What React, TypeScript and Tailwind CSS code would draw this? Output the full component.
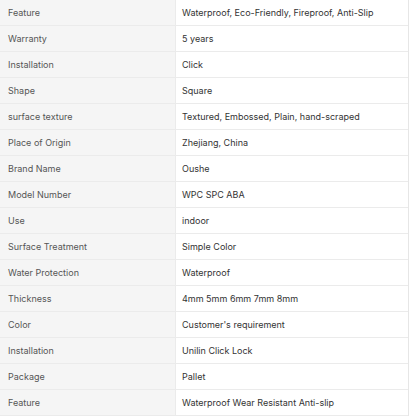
import React from 'react';

const rows = [
  ['Feature', 'Waterproof, Eco-Friendly, Fireproof, Anti-Slip'],
  ['Warranty', '5 years'],
  ['Installation', 'Click'],
  ['Shape', 'Square'],
  ['surface texture', 'Textured, Embossed, Plain, hand-scraped'],
  ['Place of Origin', 'Zhejiang, China'],
  ['Brand Name', 'Oushe'],
  ['Model Number', 'WPC SPC ABA'],
  ['Use', 'indoor'],
  ['Surface Treatment', 'Simple Color'],
  ['Water Protection', 'Waterproof'],
  ['Thickness', '4mm 5mm 6mm 7mm 8mm'],
  ['Color', "Customer's requirement"],
  ['Installation', 'Unilin Click Lock'],
  ['Package', 'Pallet'],
  ['Feature', 'Waterproof Wear Resistant Anti-slip'],
];

export default function App() {
  return (
    <div className="w-[416px] h-[416px] overflow-hidden bg-white font-['Inter',sans-serif] text-[9px]">
      <div className="w-[409px] border-r border-[#e6e6e6]">
        {rows.map((row, index) => (
          <div key={index} className="flex h-[26px] border-b border-[#ebebeb]">
            <div className="w-[176px] shrink-0 flex items-center pl-2 bg-[#f5f5f5] border-r border-[#ebebeb] text-[#555]">
              {row[0]}
            </div>
            <div className="flex-1 flex items-center pl-[6px] text-[#333]">
              {row[1]}
            </div>
          </div>
        ))}
      </div>
    </div>
  );
}
